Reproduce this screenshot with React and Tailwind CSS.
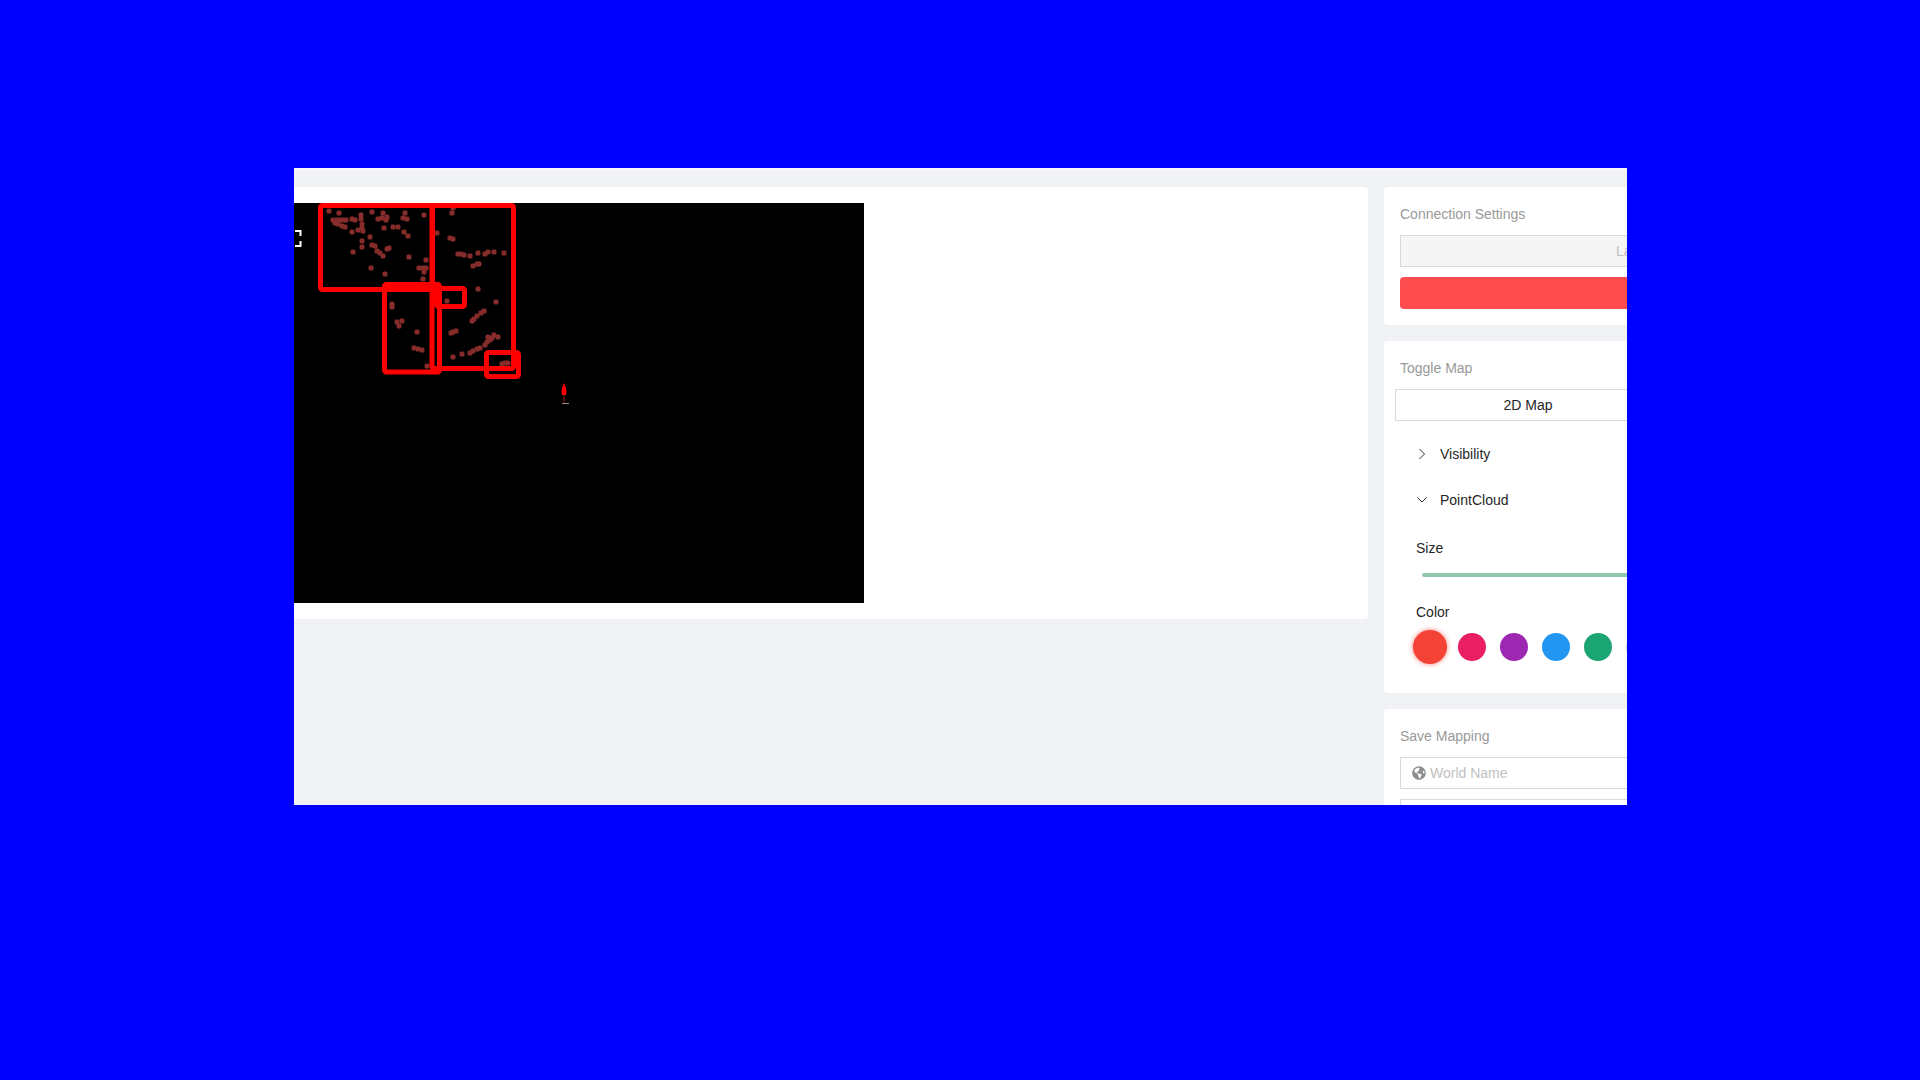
import { FaGlobeAmericas } from 'react-icons/fa';

// scan points, in canvas pixels
const points = [
    [35, 8], [45, 10], [67, 12], [78, 9], [89, 10], [93, 14], [88, 15], [84, 16], [92, 17], [111, 10], [130, 12], [109, 15], [113, 16],
    [39, 17], [43, 17], [46, 17], [49, 17], [52, 17], [41, 20], [44, 21], [48, 23], [51, 24], [58, 16], [61, 17], [67, 16], [68, 21],
    [68, 25], [64, 27], [58, 29], [69, 28], [90, 25], [99, 24], [104, 24], [110, 29], [114, 33], [76, 34], [68, 38], [68, 44], [78, 42],
    [81, 43], [83, 48], [86, 50], [89, 53], [59, 49], [93, 46], [95, 45], [115, 54], [132, 57], [77, 65], [91, 71], [125, 65], [129, 65],
    [132, 65], [130, 69], [129, 76],
    [158, 10], [159, 5], [143, 30], [156, 35], [159, 36], [164, 51], [167, 51], [170, 52], [176, 53], [184, 50], [191, 51], [194, 49],
    [200, 49], [210, 50], [179, 63], [183, 61], [185, 61], [184, 86],
    [202, 99], [153, 98], [98, 101], [98, 104], [103, 119], [108, 118], [105, 123], [123, 129], [120, 145], [124, 146], [128, 147],
    [133, 163], [190, 108], [187, 110], [183, 113], [180, 116], [178, 118], [157, 130], [159, 129], [162, 128], [159, 154], [168, 151],
    [176, 150], [179, 148], [183, 146], [186, 145], [191, 142], [193, 139], [196, 137], [200, 132], [204, 134], [194, 134], [198, 135],
    [208, 161], [211, 160], [214, 160],
];

const boxes = [
    { x: 26.5, y: 2.5, w: 112, h: 84 },
    { x: 138, y: 2.5, w: 81.5, h: 163 },
    { x: 90.5, y: 81.5, w: 55, h: 87.5 },
    { x: 142.5, y: 85.5, w: 28, h: 18 },
    { x: 192.5, y: 149.5, w: 32, h: 24 },
];

const colors = ['#f44336', '#e91e63', '#9c27b0', '#2196f3', '#1aa573', '#cfd8d4'];

function MapCanvas() {
    return (
        <div className="h-[400px] w-[570px] bg-black">
            <svg width="570" height="400" className="block">
                {points.map(([x, y], i) => (
                    <rect key={i} x={x - 2.5} y={y - 2.5} width="5" height="5" rx="1.500" fill="#862c2a" />
                ))}
                {boxes.map((b, i) => (
                    <rect key={i} x={b.x} y={b.y} width={b.w} height={b.h} rx="2" fill="none" stroke="#ff0000" strokeWidth="5" />
                ))}
                <path d="M270 180 C267.500 185 267 189 268 192 L272 192 C273 189 272.500 185 270 180Z" fill="#ff0000" />
                <path d="M270 192 V200" stroke="#a01818" strokeWidth="1" />
                <path d="M268 200.500 H275" stroke="#8a8a8a" strokeWidth="1" />
                <path d="M1 28 H6.500 V33 M6.500 38 V43 H1" fill="none" stroke="#ffffff" strokeWidth="2" />
            </svg>
        </div>
    );
}

function Chevron({ open }) {
    return (
        <svg width="12" height="12" viewBox="0 0 12 12" className="shrink-0" fill="none" stroke="#333333" strokeWidth="1">
            {open ? <path d="M1.500 3.500 L6 8 L10.500 3.500" /> : <path d="M3.500 1 L8.500 6 L3.500 11" />}
        </svg>
    );
}

function CollapseRow({ label, open }) {
    return (
        <div className="flex h-[46px] items-center gap-[12px] pl-[32px] text-[#262626]">
            <Chevron open={open} />
            <span>{label}</span>
        </div>
    );
}

export default function App() {
    return (
        <div className="h-[1080px] w-[1920px] overflow-hidden bg-[#0000ff] pl-[294px] pt-[168px] text-[14px] leading-[22px] [font-family:'Liberation_Sans',Arial,sans-serif]">
            <div className="h-[637px] w-[1333px] overflow-hidden bg-[#f0f2f5]">
                <div className="h-[2px] bg-[#f8f8fa]"></div>
                <div className="flex gap-[16px] pt-[17px]">
                    <div className="h-[432px] w-[1074px] shrink-0 rounded-r-sm bg-white py-[16px]">
                        <MapCanvas />
                    </div>

                    <div className="flex w-[320px] shrink-0 flex-col gap-[16px]">
                        <div className="rounded-sm bg-white p-[16px]">
                            <div className="mb-[10px] text-[#999999]">Connection Settings</div>
                            <div className="flex h-[32px] items-center border border-[#d9d9d9] bg-[#f5f5f5] pl-[215px] text-[#bfbfbf]">
                                La
                            </div>
                            <div className="mt-[10px] h-[32px] rounded-sm bg-[#ff4d4f]"></div>
                        </div>

                        <div className="h-[352px] rounded-sm bg-white pt-[16px]">
                            <div className="mb-[10px] pl-[16px] text-[#999999]">Toggle Map</div>
                            <div className="ml-[11px] flex h-[32px] w-[266px] items-center justify-center border border-[#d9d9d9] text-[#262626]">
                                2D Map
                            </div>
                            <div className="mt-[10px]">
                                <CollapseRow label="Visibility" />
                                <CollapseRow label="PointCloud" open />
                            </div>
                            <div className="mt-[14px] pl-[32px] text-[#262626]">Size</div>
                            <div className="ml-[38px] mt-[14px] h-[4px] rounded-full bg-[#8fc7ae]"></div>
                            <div className="mt-[24px] pl-[32px] text-[#262626]">Color</div>
                            <div className="ml-[25px] mt-[7px] flex">
                                {colors.map((c, i) => (
                                    <div key={c} className="flex h-[34px] w-[42px] shrink-0 items-center justify-center">
                                        {i === 0 ? (
                                            <div className="h-[34px] w-[34px] rounded-full shadow-[0_0_5px_rgba(244,67,54,0.7)]" style={{ backgroundColor: c }}></div>
                                        ) : (
                                            <div className="h-[28px] w-[28px] rounded-full" style={{ backgroundColor: c }}></div>
                                        )}
                                    </div>
                                ))}
                            </div>
                        </div>

                        <div className="rounded-sm bg-white p-[16px]">
                            <div className="mb-[10px] text-[#999999]">Save Mapping</div>
                            <div className="flex h-[32px] items-center gap-[4px] border border-[#d9d9d9] bg-white pl-[11px] text-[#bfbfbf]">
                                <FaGlobeAmericas size={14} className="text-[#8c8c8c]" />
                                <span>World Name</span>
                            </div>
                            <div className="mt-[10px] h-[32px] border border-[#d9d9d9] bg-white"></div>
                        </div>
                    </div>
                </div>
            </div>
        </div>
    );
}
